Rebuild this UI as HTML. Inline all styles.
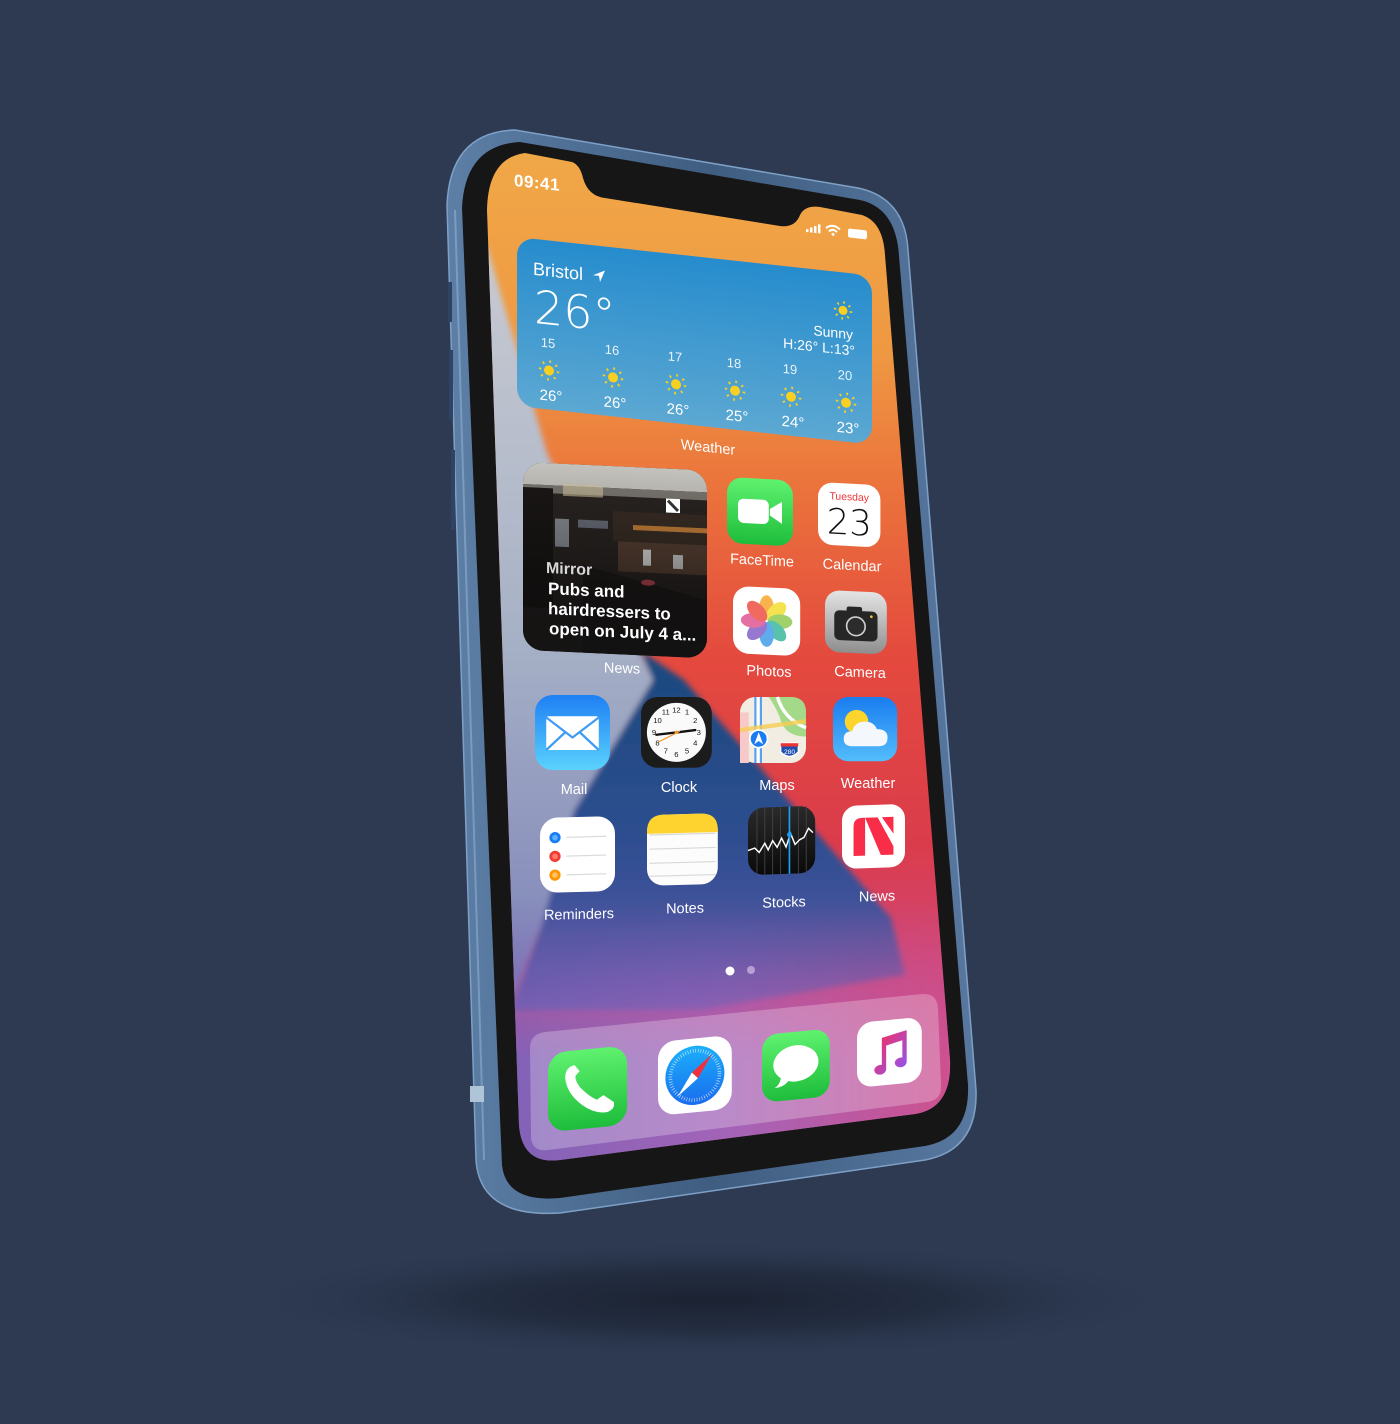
<!DOCTYPE html>
<html><head><meta charset="utf-8"><style>
html,body{margin:0;padding:0;background:#2d3a52;}
svg{display:block}
text{font-family:"Liberation Sans",sans-serif;}
.lb{fill:#fff;font-size:14.5px;text-anchor:middle;}
</style></head><body>
<svg width="1400" height="1424" viewBox="0 0 1400 1424" xmlns="http://www.w3.org/2000/svg">
<defs>
<radialGradient id="shd" cx="0.5" cy="0.5" r="0.5"><stop offset="0" stop-color="#1a2130" stop-opacity=".95"/><stop offset=".5" stop-color="#1d2535" stop-opacity=".6"/><stop offset="1" stop-color="#2d3a52" stop-opacity="0"/></radialGradient>
<filter id="b3"><feGaussianBlur stdDeviation="3"/></filter>
<filter id="b10" x="-20%" y="-20%" width="140%" height="140%"><feGaussianBlur stdDeviation="12"/></filter>
<linearGradient id="frameG" x1="0" y1="0" x2="1" y2="0"><stop offset="0" stop-color="#5d7fa6"/><stop offset=".5" stop-color="#3f5d80"/><stop offset="1" stop-color="#5878a0"/></linearGradient>
<linearGradient id="wall" gradientUnits="userSpaceOnUse" x1="0" y1="150" x2="0" y2="1170"><stop offset="0" stop-color="#f0a847"/><stop offset=".2" stop-color="#ef9842"/><stop offset=".33" stop-color="#eb733c"/><stop offset=".5" stop-color="#e4493e"/><stop offset=".68" stop-color="#db3c4b"/><stop offset=".84" stop-color="#cc4a86"/><stop offset="1" stop-color="#b468b8"/></linearGradient>
<linearGradient id="grayG" gradientUnits="userSpaceOnUse" x1="0" y1="250" x2="0" y2="1000"><stop offset="0" stop-color="#c8cad2"/><stop offset=".5" stop-color="#a8b2c6"/><stop offset="1" stop-color="#7c82b8"/></linearGradient>
<linearGradient id="blueG" gradientUnits="userSpaceOnUse" x1="0" y1="680" x2="0" y2="1000"><stop offset="0" stop-color="#1e4a80"/><stop offset=".5" stop-color="#2e4e90"/><stop offset="1" stop-color="#5a58a8"/></linearGradient>
<linearGradient id="botG" gradientUnits="userSpaceOnUse" x1="480" y1="0" x2="960" y2="0"><stop offset="0" stop-color="#7c62b6"/><stop offset=".5" stop-color="#a264b8"/><stop offset="1" stop-color="#d0508e"/></linearGradient>
<linearGradient id="fade" gradientUnits="userSpaceOnUse" x1="0" y1="900" x2="0" y2="1060"><stop offset="0" stop-color="#fff" stop-opacity="0"/><stop offset="1" stop-color="#fff" stop-opacity="1"/></linearGradient>
<mask id="botM"><rect x="0" y="0" width="1400" height="1424" fill="url(#fade)"/></mask>
<linearGradient id="wxG" x1="0" y1="0" x2="0" y2="1"><stop offset="0" stop-color="#268ccd"/><stop offset="1" stop-color="#5ca8d2"/></linearGradient>
<linearGradient id="green" x1="0" y1="0" x2="0" y2="1"><stop offset="0" stop-color="#5ff26f"/><stop offset="1" stop-color="#1dbd3b"/></linearGradient>
<linearGradient id="mailG" x1="0" y1="0" x2="0" y2="1"><stop offset="0" stop-color="#1f80f4"/><stop offset="1" stop-color="#5ad2fd"/></linearGradient>
<linearGradient id="wthG" x1="0" y1="0" x2="0" y2="1"><stop offset="0" stop-color="#1a7cf0"/><stop offset="1" stop-color="#52bdfb"/></linearGradient>
<linearGradient id="camG" x1="0" y1="0" x2="0" y2="1"><stop offset="0" stop-color="#e4e4e4"/><stop offset="1" stop-color="#8e8e8e"/></linearGradient>
<linearGradient id="safG" x1="0" y1="0" x2="0" y2="1"><stop offset="0" stop-color="#1bb0fb"/><stop offset="1" stop-color="#1a6ced"/></linearGradient>
<linearGradient id="musG" x1="0" y1="0" x2="1" y2="1"><stop offset="0" stop-color="#fa2d55"/><stop offset="1" stop-color="#8e55f5"/></linearGradient>
<linearGradient id="stkG" x1="0" y1="0" x2="0" y2="1"><stop offset="0" stop-color="#2a2a2a"/><stop offset="1" stop-color="#0a0a0a"/></linearGradient>
<linearGradient id="newsW" x1="0" y1="0" x2="0" y2="1"><stop offset="0" stop-color="#000" stop-opacity="0"/><stop offset=".5" stop-color="#000" stop-opacity=".3"/><stop offset="1" stop-color="#111" stop-opacity=".85"/></linearGradient>
<clipPath id="scr"><path d="M487,210 Q488,158 525,153 L572,162 Q580,165 583,178 Q588,196 605,198 L780,226 Q795,228 800,215 Q805,205 820,207 L862,215 Q883,222 885,255 L950,1060 Q952,1108 915,1114 L560,1160 Q522,1165 519,1125 Z"/></clipPath>
<clipPath id="nwClip"><rect x="0" y="0" width="184" height="188" rx="20"/></clipPath>
</defs>

<rect width="1400" height="1424" fill="#2d3a52"/>
<ellipse cx="710" cy="1300" rx="480" ry="60" fill="url(#shd)"/>

<!-- frame -->
<path d="M447,205 Q450,132 515,130 L858,188 Q905,198 908,250 L976,1090 Q978,1150 925,1160 L560,1213 Q480,1218 476,1160 Z" fill="url(#frameG)" stroke="#7fa0c6" stroke-width="1.5"/>
<path d="M455,210 L484,1160" stroke="#8fb0d4" stroke-width="2" opacity=".6"/>
<rect x="448" y="282" width="4" height="40" fill="#2e4462"/>
<rect x="449" y="350" width="4" height="70" fill="#2e4462"/>
<rect x="451" y="450" width="4" height="80" fill="#2e4462"/>
<rect x="470" y="1086" width="14" height="16" fill="#b0c4d8"/>
<!-- bezel -->
<path d="M462,208 Q465,145 520,142 L860,200 Q896,208 899,256 L968,1085 Q970,1138 925,1146 L560,1198 Q506,1203 502,1165 Z" fill="#161616"/>

<!-- screen -->
<g clip-path="url(#scr)">
<rect x="470" y="140" width="500" height="1050" fill="url(#wall)"/>
<g filter="url(#b3)">
<path d="M470,247 L487,247 L547,453 L653,680 L574,811 L543,921 L512,1000 L470,1000 Z" fill="url(#grayG)"/>
<path d="M640,650 L684,680 L891,918 L905,975 L700,1010 L512,1010 L543,921 L574,811 L653,680 Z" fill="url(#blueG)"/>
</g>
<rect x="440" y="880" width="560" height="320" fill="url(#botG)" mask="url(#botM)" filter="url(#b10)"/>
</g>

<!-- status -->
<text transform="translate(514,186) skewY(6)" font-size="17" font-weight="bold" fill="#fff" letter-spacing="0.5">09:41</text>
<g transform="translate(806,222) skewY(6)" fill="#fff">
<rect x="0" y="7" width="2.5" height="3"/><rect x="4" y="5" width="2.5" height="5"/><rect x="8" y="3" width="2.5" height="7"/><rect x="12" y="1" width="2.5" height="9"/>
<path d="M20,4 Q27,-2 34,4" stroke="#fff" stroke-width="2" fill="none"/><path d="M23,7 Q27,3 31,7" stroke="#fff" stroke-width="2" fill="none"/><circle cx="27" cy="9.5" r="1.5"/>
<rect x="42" y="2" width="19" height="9" rx="2"/>
</g>

<!-- weather widget -->
<g transform="translate(517,237) skewY(6.2)">
<rect x="0" y="0" width="355" height="169" rx="18" fill="url(#wxG)"/>
<text x="16" y="36" font-size="18" fill="#fff">Bristol</text>
<path d="M76,30 L88,24 L83,36 L82,30 Z" fill="#fff"/>
<text x="17" y="84" font-size="46" fill="#fff" style="font-family:'DejaVu Sans','Liberation Sans',sans-serif;font-weight:200">26°</text>
<g transform="translate(326,38)"><circle r="4.5" fill="#f8d021"/><circle r="8" fill="none" stroke="#f8d021" stroke-width="2.5" stroke-dasharray="1.6 4.68"/></g>
<text x="336" y="66" font-size="14" fill="#fff" text-anchor="end">Sunny</text>
<text x="338" y="82" font-size="14" fill="#fff" text-anchor="end">H:26° L:13°</text>
<g font-size="13" fill="#e8f2fa" text-anchor="middle">
<text x="31" y="107">15</text><text x="95" y="107">16</text><text x="158" y="107">17</text><text x="217" y="107">18</text><text x="273" y="107">19</text><text x="328" y="107">20</text></g>
<g fill="#f8d021">
<g transform="translate(32,130)"><circle r="5" /><circle r="9" fill="none" stroke="#f8d021" stroke-width="2.5" stroke-dasharray="1.8 5.27"/></g>
<g transform="translate(96,130)"><circle r="5" /><circle r="9" fill="none" stroke="#f8d021" stroke-width="2.5" stroke-dasharray="1.8 5.27"/></g>
<g transform="translate(159,130)"><circle r="5" /><circle r="9" fill="none" stroke="#f8d021" stroke-width="2.5" stroke-dasharray="1.8 5.27"/></g>
<g transform="translate(218,130)"><circle r="5" /><circle r="9" fill="none" stroke="#f8d021" stroke-width="2.5" stroke-dasharray="1.8 5.27"/></g>
<g transform="translate(274,130)"><circle r="5" /><circle r="9" fill="none" stroke="#f8d021" stroke-width="2.5" stroke-dasharray="1.8 5.27"/></g>
<g transform="translate(329,130)"><circle r="5" /><circle r="9" fill="none" stroke="#f8d021" stroke-width="2.5" stroke-dasharray="1.8 5.27"/></g>
</g>
<g font-size="15" fill="#fff" text-anchor="middle">
<text x="34" y="160">26°</text><text x="98" y="160">26°</text><text x="161" y="160">26°</text><text x="220" y="160">25°</text><text x="276" y="160">24°</text><text x="331" y="160">23°</text></g>
</g>
<text class="lb" transform="translate(708,452) skewY(6)">Weather</text>

<!-- news widget -->
<g transform="translate(523,462) skewY(2.6)">
<g clip-path="url(#nwClip)">
<rect width="184" height="188" fill="#2a2523"/>
<rect width="184" height="22" fill="#c4c2bd"/>
<rect y="22" width="184" height="8" fill="#7a7670"/>
<rect x="0" y="25" width="30" height="120" fill="#1a1716"/>
<rect x="32" y="55" width="14" height="28" fill="#8a8f95"/>
<rect x="55" y="55" width="30" height="8" fill="#6a6e78"/>
<rect x="90" y="45" width="94" height="30" fill="#3a2e26"/>
<rect x="110" y="58" width="74" height="5" fill="#c8823a"/>
<rect x="95" y="75" width="89" height="30" fill="#574134"/>
<rect x="120" y="82" width="8" height="16" fill="#ddd"/><rect x="150" y="86" width="10" height="14" fill="#ccc"/>
<path d="M60,100 L184,130 L184,188 L60,188 Z" fill="#1e1b1a"/>
<ellipse cx="125" cy="115" rx="7" ry="3" fill="#c44b55"/>
<rect x="40" y="20" width="40" height="12" fill="#d4c6a0" opacity=".6"/>
<rect width="184" height="188" fill="url(#newsW)"/>
<rect x="143" y="30" width="14" height="14" fill="#fff"/><path d="M145,32 L155,42" stroke="#333" stroke-width="3"/>
</g>
<text x="23" y="110" font-size="16" font-weight="bold" fill="#d8d8d8">Mirror</text>
<g font-weight="bold" font-size="17" fill="#fff">
<text x="25" y="131">Pubs and</text>
<text x="25" y="151">hairdressers to</text>
<text x="26" y="171">open on July 4 a...</text></g>
</g>
<text class="lb" transform="translate(622,673) skewY(2)">News</text>

<!-- FaceTime -->
<g transform="translate(727,477) skewY(3) scale(1.1)">
<rect width="60" height="60" rx="14" fill="url(#green)"/>
<rect x="10" y="19" width="28" height="22" rx="5" fill="#fff"/><path d="M39,27 L50,20 L50,40 L39,33 Z" fill="#fff"/>
</g>
<text class="lb" transform="translate(762,565) skewY(3)">FaceTime</text>
<!-- Calendar -->
<g transform="translate(818,482) skewY(3) scale(1.04)">
<rect width="60" height="60" rx="14" fill="#fff"/>
<text x="30" y="16" font-size="10" fill="#f2353a" text-anchor="middle">Tuesday</text>
<text x="30" y="49" font-size="34" fill="#111" text-anchor="middle" style="font-family:'DejaVu Sans',sans-serif;font-weight:200">23</text>
</g>
<text class="lb" transform="translate(852,570) skewY(3)">Calendar</text>
<!-- Photos -->
<g transform="translate(733,586) skewY(2.5) scale(1.12)">
<rect width="60" height="60" rx="14" fill="#fff"/>
<g opacity=".82">
<ellipse cx="30" cy="18" rx="6.5" ry="11" fill="#f7a325"/>
<ellipse cx="30" cy="18" rx="6.5" ry="11" fill="#f4dc2a" transform="rotate(45 30 30)"/>
<ellipse cx="30" cy="18" rx="6.5" ry="11" fill="#8cc84a" transform="rotate(90 30 30)"/>
<ellipse cx="30" cy="18" rx="6.5" ry="11" fill="#35b59c" transform="rotate(135 30 30)"/>
<ellipse cx="30" cy="18" rx="6.5" ry="11" fill="#3d9be9" transform="rotate(180 30 30)"/>
<ellipse cx="30" cy="18" rx="6.5" ry="11" fill="#7f5bc8" transform="rotate(225 30 30)"/>
<ellipse cx="30" cy="18" rx="6.5" ry="11" fill="#e0508e" transform="rotate(270 30 30)"/>
<ellipse cx="30" cy="18" rx="6.5" ry="11" fill="#ee4a3c" transform="rotate(315 30 30)"/>
</g></g>
<text class="lb" transform="translate(769,676) skewY(2.5)">Photos</text>
<!-- Camera -->
<g transform="translate(825,590) skewY(2.5) scale(1.03)">
<rect width="60" height="60" rx="14" fill="url(#camG)"/>
<rect x="9" y="19" width="42" height="29" rx="5" fill="#262626"/><rect x="21" y="15" width="15" height="6" rx="2" fill="#262626"/>
<circle cx="30" cy="34" r="9" fill="#2c2c2c" stroke="#cfcfcf" stroke-width="1.6"/><circle cx="45" cy="24" r="1.3" fill="#f6c443"/>
</g>
<text class="lb" transform="translate(860,677) skewY(2.5)">Camera</text>

<!-- Mail -->
<g transform="translate(535,695) scale(1.25)">
<rect width="60" height="60" rx="14" fill="url(#mailG)"/>
<rect x="9" y="17" width="42" height="27" rx="2" fill="#fff"/>
<path d="M9,18 L30,34 L51,18 M9,44 L24,30 M51,44 L36,30" stroke="#3f9cf2" stroke-width="1.8" fill="none"/>
</g>
<text class="lb" transform="translate(574,794)">Mail</text>
<!-- Clock -->
<g transform="translate(641,697) scale(1.18)">
<rect width="60" height="60" rx="14" fill="#1c1c1c"/>
<circle cx="30" cy="30" r="25" fill="#fafafa"/>
<g font-size="6.5" fill="#111" text-anchor="middle">
<text x="30" y="13">12</text><text x="39" y="15">1</text><text x="46" y="22">2</text><text x="49" y="32">3</text><text x="46" y="41">4</text><text x="39" y="48">5</text><text x="30" y="51">6</text><text x="21" y="48">7</text><text x="14" y="41">8</text><text x="11" y="32">9</text><text x="14" y="22">10</text><text x="21" y="15">11</text></g>
<path d="M30,30 L46,28 M30,30 L13,32" stroke="#111" stroke-width="2" stroke-linecap="round"/>
<path d="M33,29 L15,38" stroke="#f29a2e" stroke-width="1"/><circle cx="30" cy="30" r="1.5" fill="#f29a2e"/>
</g>
<text class="lb" transform="translate(679,792)">Clock</text>
<!-- Maps -->
<g transform="translate(740,697) scale(1.1)">
<rect width="60" height="60" rx="14" fill="#f1ede2"/>
<path d="M26,0 L46,0 Q60,0 60,14 L60,36 Q40,36 36,18 Q32,8 26,0 Z" fill="#a5d98a"/>
<path d="M34,0 Q40,20 60,28" stroke="#fff" stroke-width="3" fill="none"/>
<path d="M0,14 L8,14 L8,60 L0,60 Z" fill="#f8c9c9"/>
<rect x="13" y="0" width="7" height="60" fill="#5aa0f0"/><rect x="15" y="0" width="3" height="60" fill="#fff"/>
<path d="M0,30 L60,22" stroke="#f6cf53" stroke-width="4" opacity=".8"/>
<circle cx="17" cy="38" r="8" fill="#1a7cf0" stroke="#fff" stroke-width="1.5"/><path d="M17,32 L21,43 L17,40 L13,43 Z" fill="#fff"/>
<path d="M37,42 L53,42 L53,50 Q45,58 37,50 Z" fill="#1e4fae" stroke="#fff" stroke-width="1.2"/><rect x="37" y="42" width="16" height="3" fill="#e33"/>
<text x="45" y="52" font-size="6" fill="#fff" text-anchor="middle">280</text>
</g>
<text class="lb" transform="translate(777,790)">Maps</text>
<!-- Weather -->
<g transform="translate(833,697) scale(1.07)">
<rect width="60" height="60" rx="14" fill="url(#wthG)"/>
<circle cx="22" cy="23" r="11" fill="#fbd42c"/>
<path d="M18,46 Q10,46 10,39 Q10,32 18,32 Q20,23 30,23 Q38,23 41,30 Q51,30 51,38 Q51,46 43,46 Z" fill="#f4f8fc"/>
</g>
<text class="lb" transform="translate(868,788)">Weather</text>

<!-- Reminders -->
<g transform="translate(540,818) skewY(-1.5) scale(1.25)">
<rect width="60" height="60" rx="14" fill="#fff"/>
<circle cx="12" cy="16" r="4.5" fill="#1a7cf5"/><circle cx="12" cy="16" r="2.3" fill="#5ab0ff"/>
<circle cx="12" cy="31" r="4.5" fill="#f23b30"/><circle cx="12" cy="31" r="2.3" fill="#ff7a70"/>
<circle cx="12" cy="46" r="4.5" fill="#ff9500"/><circle cx="12" cy="46" r="2.3" fill="#ffc060"/>
<path d="M21,16 L53,16 M21,31 L53,31 M21,46 L53,46" stroke="#dcdcdc" stroke-width="1"/>
</g>
<text class="lb" transform="translate(579,919) skewY(-1.5)">Reminders</text>
<!-- Notes -->
<g transform="translate(647,815) skewY(-1.5) scale(1.18)">
<rect width="60" height="60" rx="14" fill="#fcfcfc"/>
<path d="M0,14 Q0,0 14,0 L46,0 Q60,0 60,14 L60,16 L0,16 Z" fill="#fed22f"/>
<path d="M2,17 L58,17 M2,29 L58,29 M2,41 L58,41 M2,52 L58,52" stroke="#d8d8d8" stroke-width="1"/>
</g>
<text class="lb" transform="translate(685,913) skewY(-1.5)">Notes</text>
<!-- Stocks -->
<g transform="translate(748,808) skewY(-2) scale(1.12)">
<rect width="60" height="60" rx="14" fill="url(#stkG)"/>
<path d="M8,0 V60 M15,0 V60 M22,0 V60 M29,0 V60 M45,0 V60 M52,0 V60" stroke="#444" stroke-width=".8"/>
<path d="M0,38 L6,36 L10,40 L15,32 L18,38 L22,30 L26,36 L30,28 L34,36 L38,24 L42,34 L46,30 L50,28 L54,20 L58,24" stroke="#fff" stroke-width="1.3" fill="none"/>
<path d="M37,0 V60" stroke="#1e9ef5" stroke-width="1.5"/><circle cx="37" cy="25" r="2.2" fill="#1e9ef5"/>
</g>
<text class="lb" transform="translate(784,907) skewY(-2)">Stocks</text>
<!-- News -->
<g transform="translate(842,806) skewY(-2) scale(1.05)">
<rect width="60" height="60" rx="14" fill="#fff"/>
<path d="M11,20 Q11,12 19,12 L22,12 L22,48 L11,48 Z M22,12 L34,12 L49,40 L49,48 L37,48 Z M38,12 L49,12 L49,28 Z" fill="#fa2d48"/>
</g>
<text class="lb" transform="translate(877,901) skewY(-2)">News</text>

<!-- page dots -->
<circle cx="730" cy="971" r="4.5" fill="#fff"/><circle cx="751" cy="970" r="4" fill="#c8b0e0" opacity=".8"/>

<!-- dock -->
<path d="M545,1032 L922,994 Q937,993 938,1008 L941,1085 Q942,1100 927,1102 L548,1150 Q532,1152 531,1137 L530,1048 Q530,1034 545,1032 Z" fill="#fff" opacity=".25"/>
<!-- Phone -->
<g transform="translate(548,1053) skewY(-5.5) scale(1.32)">
<rect width="60" height="60" rx="14" fill="url(#green)"/>
<path d="M17,12 Q13,14 13,20 Q14,32 26,42 Q36,50 45,49 Q49,48 50,45 L50,42 L42,36 L37,39 Q31,36 24,28 Q20,22 21,19 L24,16 L20,11 Z" fill="#fff"/>
</g>
<!-- Safari -->
<g transform="translate(658,1042) skewY(-5.5) scale(1.23)">
<rect width="60" height="60" rx="14" fill="#fff"/>
<circle cx="30" cy="30" r="24" fill="url(#safG)"/>
<circle cx="30" cy="30" r="20" fill="none" stroke="#fff" stroke-width="3" stroke-dasharray=".5 1.6" opacity=".8"/>
<path d="M44,14 L32.5,32.5 L27.5,27.5 Z" fill="#f0313b"/><path d="M16,46 L27.5,27.5 L32.5,32.5 Z" fill="#fff"/>
</g>
<!-- Messages -->
<g transform="translate(762,1035) skewY(-5.5) scale(1.13)">
<rect width="60" height="60" rx="14" fill="url(#green)"/>
<ellipse cx="30" cy="28" rx="20" ry="16" fill="#fff"/>
<path d="M17,38 Q16,46 11,48 Q20,48 24,42 Z" fill="#fff"/>
</g>
<!-- Music -->
<g transform="translate(857,1023) skewY(-5.5) scale(1.08)">
<rect width="60" height="60" rx="14" fill="#fff"/>
<path d="M23,16 L46,11 L46,40 A5.5,4.5 0 1 1 42,36 L42,20 L27,23.5 L27,45 A5.5,4.5 0 1 1 23,41 Z" fill="url(#musG)"/>
</g>
</svg>
</body></html>
